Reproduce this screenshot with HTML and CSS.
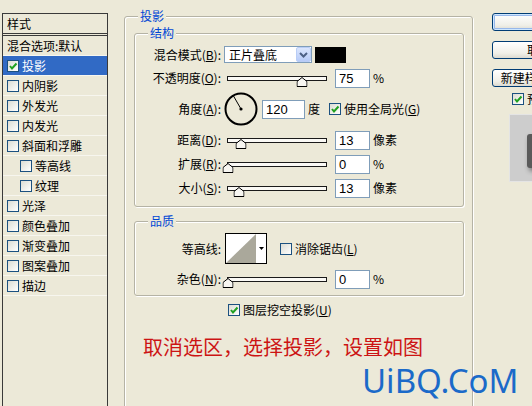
FILE: index.html
```html
<!DOCTYPE html>
<html lang="zh-CN">

<head>
    <meta charset="UTF-8">
    <meta name="viewport" content="width=device-width, initial-scale=1.0">
    <title>图层样式</title>
    <link rel="stylesheet" href="styles.css">
</head>

<body>
    <div class="dialog">
        <!-- 左侧样式列表 -->
        <div class="style-list">
            <div class="list-head">样式</div>
            <div class="list-item">混合选项:默认</div>
            <div class="list-item selected"><span class="check"><svg width="10" height="10" viewBox="0 0 10 10"><path d="M2 5 L4 7.5 L8.5 2.5" fill="none" stroke="#21a121" stroke-width="2"/></svg></span>投影</div>
            <div class="list-item"><span class="check"></span>内阴影</div>
            <div class="list-item"><span class="check"></span>外发光</div>
            <div class="list-item"><span class="check"></span>内发光</div>
            <div class="list-item"><span class="check"></span>斜面和浮雕</div>
            <div class="list-item sub"><span class="check"></span>等高线</div>
            <div class="list-item sub"><span class="check"></span>纹理</div>
            <div class="list-item"><span class="check"></span>光泽</div>
            <div class="list-item"><span class="check"></span>颜色叠加</div>
            <div class="list-item"><span class="check"></span>渐变叠加</div>
            <div class="list-item"><span class="check"></span>图案叠加</div>
            <div class="list-item"><span class="check"></span>描边</div>
        </div>

        <!-- 投影设置 -->
        <div class="group outer">
            <div class="group-title">投影</div>

            <div class="group inner">
                <div class="group-title">结构</div>

                <div class="row r-mode">
                    <div class="label">混合模式(<u>B</u>):</div>
                    <div class="select">
                        <span class="select-text">正片叠底</span>
                        <span class="select-btn"><svg width="9" height="6" viewBox="0 0 9 6"><path d="M1 1 L4.5 4.5 L8 1" fill="none" stroke="#4d6185" stroke-width="2"/></svg></span>
                    </div>
                    <div class="swatch"></div>
                </div>

                <div class="row r-opacity">
                    <div class="label">不透明度(<u>O</u>):</div>
                    <div class="slider"><span class="thumb" style="left: 75%"><svg width="11" height="10" viewBox="0 0 11 10"><path d="M0.5 4.5 L5.5 0.5 L10.5 4.5 L10.5 9.5 L0.5 9.5 Z" fill="#f7f6f1" stroke="#000"/></svg></span></div>
                    <div class="num">75</div>
                    <div class="unit">%</div>
                </div>

                <div class="row r-angle">
                    <div class="label">角度(<u>A</u>):</div>
                    <svg class="dial" width="34" height="34" viewBox="0 0 34 34">
                        <circle cx="17" cy="17" r="15.5" fill="none" stroke="#000" stroke-width="2"/>
                        <line x1="17" y1="17" x2="9.5" y2="4" stroke="#000" stroke-width="1"/>
                        <circle cx="17" cy="17" r="1.6" fill="#000"/>
                    </svg>
                    <div class="num wide">120</div>
                    <div class="unit">度</div>
                    <span class="check gap-l"><svg width="10" height="10" viewBox="0 0 10 10"><path d="M2 5 L4 7.5 L8.5 2.5" fill="none" stroke="#21a121" stroke-width="2"/></svg></span>
                    <span class="check-label">使用全局光(<u>G</u>)</span>
                </div>

                <div class="row r-std">
                    <div class="label">距离(<u>D</u>):</div>
                    <div class="slider"><span class="thumb" style="left: 13%"><svg width="11" height="10" viewBox="0 0 11 10"><path d="M0.5 4.5 L5.5 0.5 L10.5 4.5 L10.5 9.5 L0.5 9.5 Z" fill="#f7f6f1" stroke="#000"/></svg></span></div>
                    <div class="num">13</div>
                    <div class="unit">像素</div>
                </div>

                <div class="row r-std">
                    <div class="label">扩展(<u>R</u>):</div>
                    <div class="slider"><span class="thumb" style="left: 0%"><svg width="11" height="10" viewBox="0 0 11 10"><path d="M0.5 4.5 L5.5 0.5 L10.5 4.5 L10.5 9.5 L0.5 9.5 Z" fill="#f7f6f1" stroke="#000"/></svg></span></div>
                    <div class="num">0</div>
                    <div class="unit">%</div>
                </div>

                <div class="row r-std">
                    <div class="label">大小(<u>S</u>):</div>
                    <div class="slider"><span class="thumb" style="left: 11%"><svg width="11" height="10" viewBox="0 0 11 10"><path d="M0.5 4.5 L5.5 0.5 L10.5 4.5 L10.5 9.5 L0.5 9.5 Z" fill="#f7f6f1" stroke="#000"/></svg></span></div>
                    <div class="num">13</div>
                    <div class="unit">像素</div>
                </div>
            </div>

            <div class="group inner quality">
                <div class="group-title">品质</div>

                <div class="row r-contour">
                    <div class="label">等高线:</div>
                    <div class="contour">
                        <svg class="contour-pic" width="30" height="29" viewBox="0 0 30 29">
                            <rect width="30" height="29" fill="#fff"/>
                            <polygon points="0,29 30,0 30,29" fill="#aaa89b"/>
                        </svg>
                        <span class="contour-arrow"><svg width="5" height="3" viewBox="0 0 5 3"><polygon points="0,0 5,0 2.5,3" fill="#000"/></svg></span>
                    </div>
                    <span class="check gap-aa"></span>
                    <span class="check-label">消除锯齿(<u>L</u>)</span>
                </div>

                <div class="row r-std">
                    <div class="label">杂色(<u>N</u>):</div>
                    <div class="slider"><span class="thumb" style="left: 0%"><svg width="11" height="10" viewBox="0 0 11 10"><path d="M0.5 4.5 L5.5 0.5 L10.5 4.5 L10.5 9.5 L0.5 9.5 Z" fill="#f7f6f1" stroke="#000"/></svg></span></div>
                    <div class="num">0</div>
                    <div class="unit">%</div>
                </div>
            </div>

            <div class="knockout">
                <span class="check"><svg width="10" height="10" viewBox="0 0 10 10"><path d="M2 5 L4 7.5 L8.5 2.5" fill="none" stroke="#21a121" stroke-width="2"/></svg></span>
                <span class="check-label">图层挖空投影(<u>U</u>)</span>
            </div>

            <div class="note">取消选区，选择投影，设置如图</div>
        </div>

        <!-- 右侧按钮 -->
        <div class="side">
            <div class="btn default">好</div>
            <div class="btn">取消</div>
            <div class="btn">新建样式(<u>W</u>)...</div>
            <div class="preview-check">
                <span class="check"><svg width="10" height="10" viewBox="0 0 10 10"><path d="M2 5 L4 7.5 L8.5 2.5" fill="none" stroke="#21a121" stroke-width="2"/></svg></span>
                <span class="check-label">预览(<u>V</u>)</span>
            </div>
            <div class="preview">
                <div class="preview-shape"></div>
            </div>
        </div>
    </div>

    <div class="watermark">UiBQ.CoM</div>
</body>

</html>
```

FILE: styles.css
```css
* {
    box-sizing: border-box;
}

body {
    margin: 0;
    width: 532px;
    height: 406px;
    overflow: hidden;
    position: relative;
    background-color: #ece9d8;
    color: #000;
    font: 12px/14px "Noto Sans CJK SC", "Liberation Sans", sans-serif;
}

u {
    text-decoration: underline;
    text-underline-offset: 1px;
}

.dialog {
    display: flex;
    align-items: flex-start;
    height: 406px;
}

/* 样式列表 */
.style-list {
    flex: none;
    width: 106px;
    height: 400px;
    margin: 13px 0 0 2px;
    border: 1px solid #3a3a3a;
}

.list-head {
    height: 22px;
    padding: 3px 0 0 4px;
    border-bottom: 3px double #3a3a3a;
}

.list-item {
    display: flex;
    align-items: center;
    height: 20px;
    padding-left: 4px;
    border-bottom: 1px solid #f7f6ef;
}

.list-item.sub {
    padding-left: 17px;
}

.list-item .check {
    margin-right: 3px;
}

.list-item.selected {
    background-color: #316ac5;
    color: #fff;
}

.check {
    flex: none;
    display: inline-flex;
    align-items: center;
    justify-content: center;
    width: 12px;
    height: 12px;
    border: 1px solid #1c5180;
    background: linear-gradient(135deg, #dcdcd3, #ffffff);
}

/* 分组框 */
.group {
    border: 1px solid #b5b3a5;
    border-radius: 3px;
    box-shadow: inset 1px 1px 0 #fff, 1px 1px 0 #fff;
}

.group-title {
    width: max-content;
    margin: -8px 0 0 13px;
    padding: 0 2px;
    line-height: 14px;
    color: #0046d5;
    background-color: #ece9d8;
}

.outer {
    flex: none;
    width: 349px;
    height: 400px;
    margin: 16px 0 0 16px;
}

.inner {
    width: 330px;
    margin: 10px 0 0 9px;
    padding-bottom: 8px;
}

.quality {
    margin-top: 14px;
    padding-bottom: 6px;
}

.row {
    display: flex;
    align-items: center;
    height: 20px;
    margin-top: 4px;
}

.r-mode {
    height: 19px;
    margin-top: 5px;
}

.r-angle {
    height: 34px;
}

.r-contour {
    height: 31px;
    margin-top: 5px;
}

.quality .r-std {
    margin-top: 5px;
}

.label {
    flex: none;
    width: 86px;
    margin-right: 3px;
    text-align: right;
    white-space: nowrap;
}

.select {
    display: flex;
    width: 88px;
    height: 17px;
    border: 1px solid #7f9db9;
    background-color: #fff;
}

.select-text {
    flex: 1;
    padding-left: 4px;
    line-height: 15px;
}

.select-btn {
    display: flex;
    align-items: center;
    justify-content: center;
    width: 15px;
    border: 1px solid #b9cdf6;
    border-radius: 2px;
    background: linear-gradient(#dbe6fd, #b7cbf8);
}

.swatch {
    width: 31px;
    height: 16px;
    margin-left: 3px;
    background-color: #000;
}

.slider {
    position: relative;
    width: 100px;
    height: 5px;
    margin-left: 3px;
    border: 1px solid #1a1a1a;
    background-color: #faf9f5;
}

.thumb {
    position: absolute;
    top: 0;
    display: block;
    width: 11px;
    height: 10px;
    transform: translateX(-50%);
}

.thumb svg {
    display: block;
}

.num {
    width: 35px;
    height: 19px;
    margin-left: 8px;
    padding-left: 3px;
    border: 1px solid #7f9db9;
    background-color: #fff;
    font: 13px/17px "Liberation Sans", sans-serif;
}

.num.wide {
    width: 43px;
    margin-left: 4px;
}

.unit {
    margin-left: 3px;
}

.dial {
    flex: none;
}

.gap-l {
    margin-left: 9px;
}

.check-label {
    margin-left: 3px;
    white-space: nowrap;
}

.contour {
    display: flex;
    width: 42px;
    height: 31px;
    margin-left: 1px;
    border: 1px solid #000;
    background-color: #fff;
}

.contour-pic {
    display: block;
}

.contour-arrow {
    flex: 1;
    display: flex;
    align-items: center;
    justify-content: center;
}

.gap-aa {
    margin-left: 13px;
}

.knockout {
    display: flex;
    align-items: center;
    height: 16px;
    margin: 6px 0 0 103px;
}

.note {
    margin: 19px 0 0 18px;
    font-size: 20px;
    line-height: 20px;
    color: #cc1414;
}

/* 右侧按钮 */
.side {
    flex: none;
    width: 94px;
    margin: 13px 0 0 19px;
}

.btn {
    height: 18px;
    margin-bottom: 10px;
    border: 1px solid #003c74;
    border-radius: 3px;
    background: linear-gradient(#ffffff, #f0efe8 70%, #dcdad0);
    line-height: 16px;
    text-align: center;
    white-space: nowrap;
}

.btn.default {
    box-shadow: inset 0 0 0 1px #cee7ff, inset 0 0 0 2px #98b8ea;
}

.preview-check {
    display: flex;
    align-items: center;
    height: 12px;
    margin: -4px 0 0 20px;
}

.preview {
    width: 80px;
    height: 68px;
    margin: 9px 0 0 17px;
    padding: 19px 0 0 17px;
    border: 1px solid #e4e4e4;
    background-color: #cdcdcd;
}

.preview-shape {
    width: 50px;
    height: 34px;
    border-radius: 3px;
    background-color: #5a5a5a;
    box-shadow: 2px 3px 5px rgba(0, 0, 0, 0.45);
}

.watermark {
    position: absolute;
    left: 362px;
    top: 364px;
    font: 33px/33px "Noto Sans", sans-serif;
    color: #1b6ac9;
}
```
